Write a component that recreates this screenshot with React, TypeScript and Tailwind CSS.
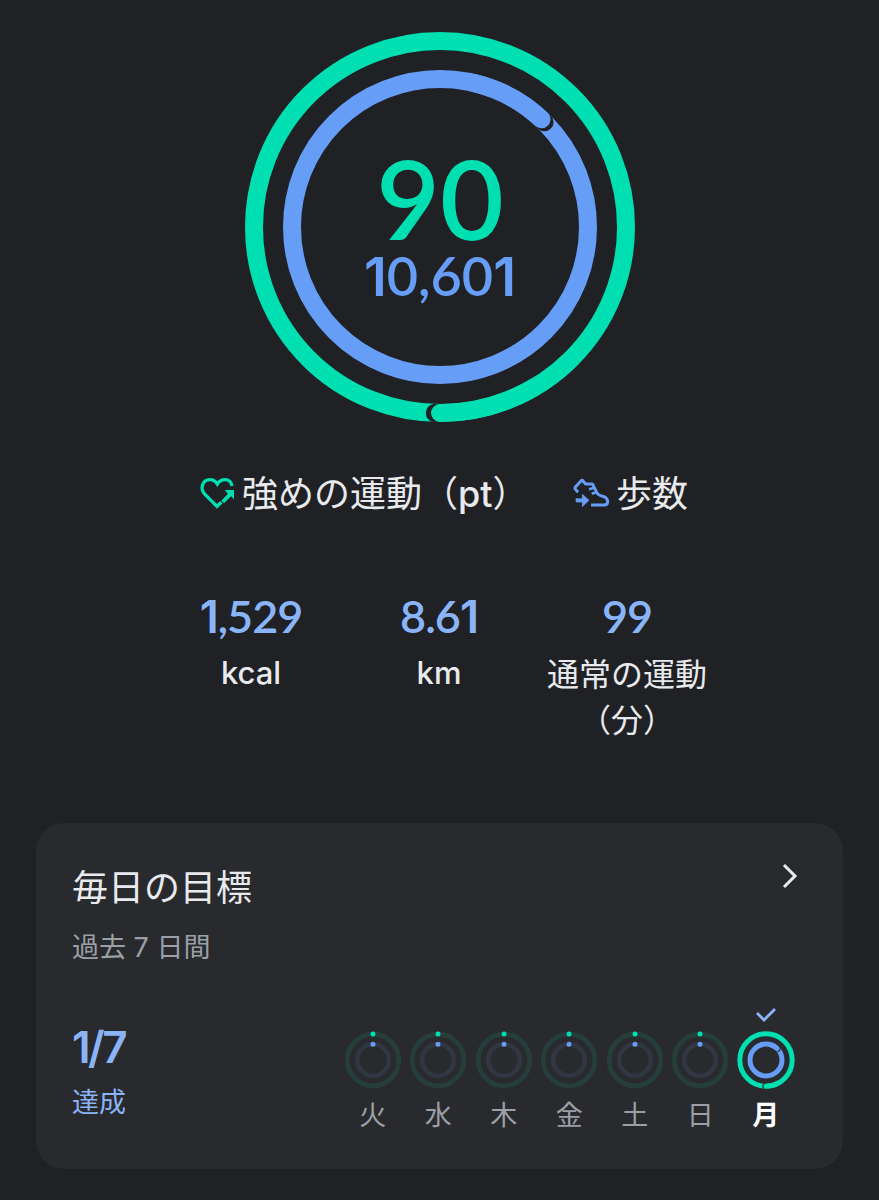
import clsx from 'clsx';

const GREEN = '#00dfb2';
const BLUE = '#669df6';

const stats = [
  { value: '1,529', label: 'kcal', labelClass: 'text-[31px] leading-[40px] font-medium' },
  { value: '8.61', label: 'km', labelClass: 'text-[31px] leading-[40px] font-medium' },
  { value: '99', label: '通常の運動（分）', labelClass: 'text-[32px] leading-[46px]' },
];

const days = ['火', '水', '木', '金', '土', '日', '月'];

function point(c: number, r: number, deg: number) {
  const a = (deg * Math.PI) / 180;
  return { cx: c + r * Math.sin(a), cy: c - r * Math.cos(a) };
}

interface LapProps {
  c: number;
  r: number;
  width: number;
  deg: number;
  gap: number;
  color: string;
  bg: string;
}

// Full ring whose second lap ends at `deg`, with a thin shadow past the round cap
function Lap({ c, r, width, deg, gap, color, bg }: LapProps) {
  const shadow = point(c, r, deg + (gap / r) * (180 / Math.PI));
  const cap = point(c, r, deg);
  const start = point(c, r, deg - 30);
  return (
    <g>
      <circle cx={c} cy={c} r={r} fill="none" stroke={color} strokeWidth={width} />
      <circle {...shadow} r={width / 2 + 0.2} fill={bg} />
      <path
        d={`M${start.cx} ${start.cy} A${r} ${r} 0 0 1 ${cap.cx} ${cap.cy}`}
        fill="none"
        stroke={color}
        strokeWidth={width}
        strokeLinecap="round"
      />
    </g>
  );
}

// Lato figures, except for the "1", which has no foot in Inter
function Figures({ value }: { value: string }) {
  return (
    <>
      {value.split(/(1)/).filter(Boolean).map((part, i) =>
        part === '1' ? (
          <span key={i} className="font-['Inter',sans-serif]">1</span>
        ) : (
          part
        )
      )}
    </>
  );
}

function HeartIcon() {
  return (
    <svg className="mb-[2px] h-[42px] w-[42px]" viewBox="0 0 126 126" fill="none">
      <path
        d="M76 91 L63 103 L27 67 C10 50 20 23 42 23 C53 23 60 30 64 36 C68 30 76 23 87 23 C99 23 106 31 108 42"
        stroke={GREEN}
        strokeWidth="10"
      />
      <path d="M86 54 H114 V82 L105 73 L84 94 L76 86 L96 65 Z" fill={GREEN} />
    </svg>
  );
}

function ShoeIcon() {
  return (
    <svg className="mb-[2px] h-[42px] w-[42px]" viewBox="0 0 126 126" fill="none" stroke={BLUE} strokeWidth="9">
      <path
        d="M24 61 L15 50 Q14 47 17 44 L33 27 Q36 23 39 27 L45 34 Q48 37 54 36 L66 36 Q69 37 71 43 L80 61 Q83 68 90 70 L104 75 Q113 79 113 90 Q112 99 103 99 H63"
        strokeLinejoin="round"
      />
      <path d="M57 52 L73 47 M65 65 L81 60" strokeWidth="8" />
      <path d="M18 80 H37 V67 L57 85 L37 104 V90 H18 Z" fill={BLUE} stroke={BLUE} strokeWidth="2" />
    </svg>
  );
}

function DayRing({ done }: { done: boolean }) {
  return (
    <svg className="h-[60px] w-[60px]" viewBox="0 0 60 60">
      {done ? (
        <>
          <Lap c={30} r={26.2} width={5} deg={180} gap={1} color={GREEN} bg="#292a2d" />
          <Lap c={30} r={16} width={5} deg={44} gap={0.9} color={BLUE} bg="#292a2d" />
        </>
      ) : (
        <>
          <circle cx="30" cy="30" r="25.8" fill="none" stroke="#263e3b" strokeWidth="4.8" />
          <circle cx="30" cy="30" r="15.8" fill="none" stroke="#303642" strokeWidth="4.8" />
          <circle cx="30" cy="4" r="2.5" fill={GREEN} />
          <circle cx="30" cy="14.2" r="2.5" fill={BLUE} />
        </>
      )}
    </svg>
  );
}

export default function App() {
  return (
    <div className="h-[1200px] w-[879px] overflow-hidden bg-[#202124] pt-8 font-['Inter','Noto_Sans_CJK_JP',sans-serif] text-[#e8eaed]">
      {/* Rings */}
      <div className="ml-[245px] grid h-[390px] w-[390px] place-items-center">
        <svg className="col-start-1 row-start-1 h-[390px] w-[390px]" viewBox="0 0 390 390">
          <Lap c={195} r={186} width={18} deg={180} gap={5} color={GREEN} bg="#202124" />
          <Lap c={195} r={148} width={18} deg={43.3} gap={4} color={BLUE} bg="#202124" />
        </svg>
        <div className="col-start-1 row-start-1 flex flex-col items-center pt-[6px] font-['Lato',sans-serif] font-semibold">
          <span className="text-[110px] leading-[88px] text-[#00dfb2]">90</span>
          <span className="mt-[4px] text-[54px] leading-[62px] text-[#669df6]">
            <Figures value="10,601" />
          </span>
        </div>
      </div>

      {/* Legend */}
      <div className="mt-[50px] flex h-[44px] items-center pl-[196px] text-[36px] leading-[44px]">
        <HeartIcon />
        <span className="ml-[4px] w-[328px] whitespace-nowrap">
          強めの運動（<span className="font-medium">pt</span>）
        </span>
        <ShoeIcon />
        <span className="ml-[4px]">歩数</span>
      </div>

      {/* Stats */}
      <div className="mt-[73px] flex pl-[157px]">
        {stats.map((s) => (
          <div key={s.label} className="flex w-[188px] flex-col items-center">
            <span className="font-['Lato',sans-serif] text-[45px] leading-[54px] font-semibold tracking-[-1px] text-[#8ab4f8]">
              <Figures value={s.value} />
            </span>
            <span className={clsx('mt-[9px] w-[164px] text-center', s.labelClass)}>{s.label}</span>
          </div>
        ))}
      </div>

      {/* Daily goals */}
      <div className="mt-[79px] ml-9 h-[346px] w-[807px] rounded-[28px] bg-[#292a2d] px-9 pt-[41px]">
        <div className="flex h-[48px] justify-between">
          <h2 className="text-[36px] leading-[48px]">毎日の目標</h2>
          <svg className="-mt-[2px] mr-[7px] h-[28px] w-[20px]" viewBox="0 0 20 28" fill="none">
            <path d="M4 3 L15 14 L4 25" stroke="#e8eaed" strokeWidth="3" />
          </svg>
        </div>
        <p className="mt-[16px] text-[27px] leading-[40px] text-[#9aa0a6]">過去 7 日間</p>
        <div className="mt-[14px] flex justify-between text-[27px] leading-[40px]">
          <div className="flex flex-col pt-[38px] text-[#8ab4f8]">
            <span className="text-[44px] leading-[54px] font-semibold tracking-[-2.5px]">1/7</span>
            <span className="mt-[9px]">達成</span>
          </div>
          <div className="mr-[8.5px] flex pt-[19px]">
            {days.map((d) => (
              <div key={d} className="flex w-[65.5px] flex-col items-center">
                <svg className="mb-[5px] h-[24px] w-[24px]" viewBox="0 0 24 24" fill="none">
                  {d === '月' && <path d="M3 12 L10 19 L21 8" stroke="#8ab4f8" strokeWidth="2.8" />}
                </svg>
                <DayRing done={d === '月'} />
                <span className={clsx('mt-[6px]', d === '月' ? 'font-bold text-white' : 'text-[#9aa0a6]')}>{d}</span>
              </div>
            ))}
          </div>
        </div>
      </div>
    </div>
  );
}
